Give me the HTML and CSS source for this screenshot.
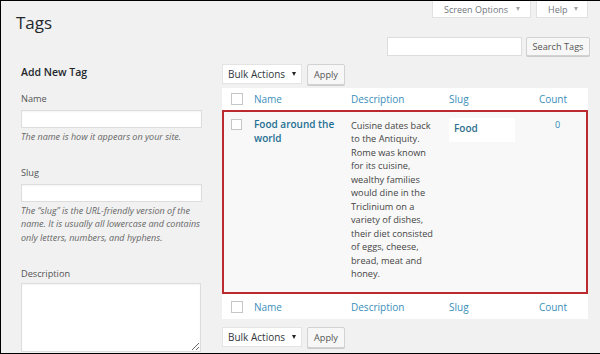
FILE: index.html
```html
<!DOCTYPE html>
<html lang="en">
<head>
<meta charset="utf-8">
<title>Tags</title>
<link rel="stylesheet" href="styles.css">
</head>
<body>
<div class="page">
  <div class="topbar">
    <h1 class="title">Tags</h1>
    <div class="tabs">
      <span class="tab tab-screen">Screen Options <i class="caret"></i></span>
      <span class="tab tab-help">Help <i class="caret"></i></span>
    </div>
  </div>
  <div class="searchrow">
    <span class="search-input"></span>
    <span class="btn btn-search">Search Tags</span>
  </div>
  <div class="cols">
    <div class="col-left">
      <h2 class="form-title">Add New Tag</h2>
      <div class="field field-name">
        <label class="field-label">Name</label>
        <span class="input"></span>
        <p class="help">The name is how it appears on your site.</p>
      </div>
      <div class="field field-slug">
        <label class="field-label">Slug</label>
        <span class="input"></span>
        <p class="help">The “slug” is the URL-friendly version of the<br>name. It is usually all lowercase and contains<br>only letters, numbers, and hyphens.</p>
      </div>
      <div class="field field-desc">
        <label class="field-label label-desc">Description</label>
        <textarea class="textarea"></textarea>
      </div>
    </div>
    <div class="col-right">
      <div class="tablenav">
        <span class="select">Bulk Actions <i class="caret-dark"></i></span>
        <span class="btn btn-apply">Apply</span>
      </div>
      <div class="list">
        <div class="list-row list-head">
          <span class="cell cell-cb"><span class="cb"></span></span>
          <span class="cell cell-name">Name</span>
          <span class="cell cell-desc">Description</span>
          <span class="cell cell-slug">Slug</span>
          <span class="cell cell-count">Count</span>
        </div>
        <div class="list-row list-item">
          <span class="cell cell-cb"><span class="cb"></span></span>
          <span class="cell cell-name"><span class="item-name">Food around the world</span></span>
          <span class="cell cell-desc"><span class="item-desc">Cuisine dates back<br>to the Antiquity.<br>Rome was known<br>for its cuisine,<br>wealthy families<br>would dine in the<br>Triclinium on a<br>variety of dishes,<br>their diet consisted<br>of eggs, cheese,<br>bread, meat and<br>honey.</span></span>
          <span class="cell cell-slug"><span class="slug-box">Food</span></span>
          <span class="cell cell-count"><span class="item-count">0</span></span>
        </div>
        <div class="list-row list-foot">
          <span class="cell cell-cb"><span class="cb"></span></span>
          <span class="cell cell-name">Name</span>
          <span class="cell cell-desc">Description</span>
          <span class="cell cell-slug">Slug</span>
          <span class="cell cell-count">Count</span>
        </div>
      </div>
      <div class="tablenav tablenav-bottom">
        <span class="select">Bulk Actions <i class="caret-dark"></i></span>
        <span class="btn btn-apply">Apply</span>
      </div>
    </div>
  </div>
</div>
</body>
</html>
```
FILE: styles.css
```css
html, body {
  margin: 0;
  padding: 0;
  background: #f1f1f1;
}
body {
  font-family: "Open Sans", "Noto Sans", sans-serif;
  color: #444;
}
.page {
  width: 600px;
  height: 354px;
  box-sizing: border-box;
  border: 1px solid #000;
  border-right: 0;
  background: #f1f1f1;
  padding: 0 10px 0 15px;
  overflow: hidden;
}
.topbar {
  display: flex;
  justify-content: space-between;
  align-items: flex-start;
  height: 36px;
}
.title {
  margin: 11px 0 0 0;
  font-size: 17px;
  line-height: 22px;
  font-weight: 400;
  color: #23282d;
}
.tabs {
  display: flex;
  gap: 5px;
  margin-right: 2px;
}
.tab {
  display: flex;
  align-items: center;
  box-sizing: border-box;
  height: 17px;
  background: #fff;
  border: 1px solid #e2e2e2;
  border-top: 0;
  font-size: 9px;
  color: #72777c;
  padding-left: 11px;
}
.tab-screen { width: 99px; }
.tab-help { width: 52px; }
.caret {
  display: inline-block;
  width: 0;
  height: 0;
  border-left: 2.5px solid transparent;
  border-right: 2.5px solid transparent;
  border-top: 4px solid #a0a5aa;
  margin-left: 8px;
}
.tab-help .caret { margin-left: 7px; }
.searchrow {
  display: flex;
  justify-content: flex-end;
  gap: 4px;
  height: 19px;
}
.search-input {
  width: 135px;
  height: 19px;
  box-sizing: border-box;
  background: #fff;
  border: 1px solid #ddd;
}
.btn {
  display: flex;
  align-items: center;
  justify-content: center;
  box-sizing: border-box;
  background: #f7f7f7;
  border: 1px solid #d2d2d2;
  border-radius: 2px;
  box-shadow: 0 1px 0 #ccc;
  font-size: 9.2px;
  color: #555;
}
.btn-search {
  width: 64px;
  height: 19px;
}
.cols {
  display: flex;
  gap: 20px;
}
.col-left {
  width: 181px;
  padding-left: 5px;
}
.col-right {
  width: 366px;
  padding-top: 8px;
}
.form-title {
  margin: 9px 0 14px 0;
  font-size: 10.5px;
  line-height: 14px;
  font-weight: 600;
  color: #23282d;
}
.field-label {
  display: block;
  font-size: 9.2px;
  line-height: 11px;
  color: #555;
  margin-bottom: 6px;
}
.label-desc { margin-bottom: 4px; }
.field { margin-bottom: 24px; }
.input {
  display: block;
  box-sizing: border-box;
  width: 181px;
  height: 18px;
  background: #fff;
  border: 1px solid #ddd;
  box-shadow: inset 0 1px 2px rgba(0,0,0,.05);
}
.help {
  margin: 2px 0 0 0;
  font-size: 9px;
  line-height: 13.2px;
  font-style: italic;
  color: #666;
  white-space: nowrap;
}
.textarea {
  display: block;
  box-sizing: border-box;
  width: 180px;
  height: 69px;
  margin: 0;
  background: #fff;
  border: 1px solid #ddd;
  box-shadow: inset 0 1px 2px rgba(0,0,0,.05);
  resize: vertical;
}
.tablenav {
  display: flex;
  align-items: center;
  gap: 5px;
  height: 20px;
}
.tablenav-bottom { margin-top: 8px; }
.select {
  display: flex;
  align-items: center;
  box-sizing: border-box;
  width: 80px;
  height: 20px;
  padding-left: 5px;
  background: #fff;
  border: 1px solid #e4e4e4;
  font-size: 10px;
  color: #32373c;
}
.caret-dark {
  display: inline-block;
  width: 0;
  height: 0;
  border-left: 2.5px solid transparent;
  border-right: 2.5px solid transparent;
  border-top: 4px solid #222;
  margin-left: 7px;
}
.btn-apply {
  width: 38px;
  height: 21px;
}
.list {
  margin-top: 4px;
  width: 366px;
}
.list-row {
  display: grid;
  grid-template-columns: 24px 97px 98px 81px 66px;
}
.list-head, .list-foot {
  background: #fff;
  align-items: center;
  font-size: 10px;
  line-height: 14px;
  color: #3a8fba;
}
.list-head { height: 22px; }
.list-foot { height: 25px; }
.list-item {
  height: 184px;
  align-items: start;
  background: #f8f8f8;
  outline: 2px solid #bb2a2e;
  outline-offset: -2px;
}
.cell-cb { padding-left: 9px; }
.cb {
  display: block;
  box-sizing: border-box;
  width: 12px;
  height: 12px;
  background: #fff;
  border: 1px solid #c4c7ca;
}
.cell-name, .cell-desc, .cell-slug { padding-left: 8px; }
.cell-count { text-align: center; padding-right: 4px; }
.list-item .cell-cb { padding-top: 9px; }
.list-item .cb { width: 11px; height: 11px; }
.list-item .cell-name { padding-top: 7px; padding-right: 4px; }
.item-name {
  display: block;
  font-size: 10px;
  line-height: 14px;
  font-weight: 600;
  color: #1f6f93;
}
.list-item .cell-desc { padding-top: 8.7px; }
.item-desc {
  display: block;
  font-size: 9.2px;
  line-height: 13.5px;
  color: #444;
  white-space: nowrap;
}
.list-item .cell-slug { padding-top: 7.7px; }
.slug-box {
  display: block;
  box-sizing: border-box;
  width: 66px;
  height: 24px;
  padding: 3px 0 0 5px;
  background: #fff;
  font-size: 10px;
  line-height: 14px;
  font-weight: 600;
  color: #2f6f8c;
}
.list-item .cell-count { padding: 8px 0 0 5px; }
.item-count {
  display: block;
  font-size: 9px;
  line-height: 13px;
  color: #2b87b5;
}
```
